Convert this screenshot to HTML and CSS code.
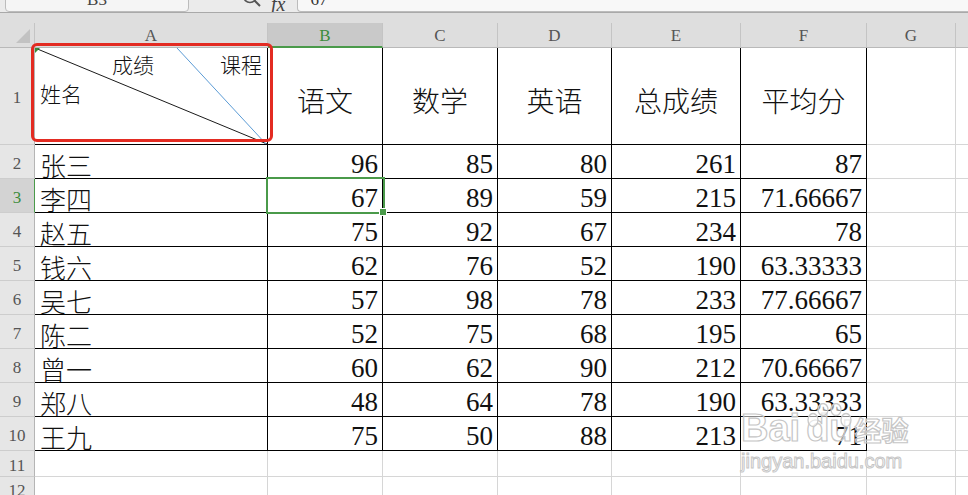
FILE: index.html
```html
<!DOCTYPE html>
<html lang="zh-CN">
<head>
	<meta charset="UTF-8" />
	<title>成绩表</title>
	<link rel="stylesheet" href="styles.css">
</head>
<body>
<div class="toolbar">
	<div class="namebox">B3</div>
	<svg class="zoom-icon" width="22" height="22" viewBox="0 0 22 22">
		<circle cx="9" cy="8" r="6.5" fill="none" stroke="#555" stroke-width="1.6"/>
		<line x1="13.5" y1="12.5" x2="19" y2="18" stroke="#555" stroke-width="2"/>
	</svg>
	<span class="fx">fx</span>
	<div class="formula">67</div>
</div>
<div class="topgap"></div>

<div class="sheet">
	<div class="corner"><span class="tri"></span></div>
	<div class="ch">A</div>
	<div class="ch sel">B</div>
	<div class="ch">C</div>
	<div class="ch">D</div>
	<div class="ch">E</div>
	<div class="ch">F</div>
	<div class="ch">G</div>
	<div class="ch last"></div>

	<!-- row 1: header -->
	<div class="rh">1</div>
	<div class="cell d diag">
		<svg class="diag-lines" viewBox="0 0 232 96" preserveAspectRatio="none">
			<line x1="0" y1="0" x2="232" y2="96" stroke="#1a1a1a" stroke-width="1"/>
			<line x1="142" y1="0" x2="231" y2="96" stroke="#5b9bd5" stroke-width="1"/>
			<polygon points="0,0 5,0 0,5" fill="#3a8a3a"/>
		</svg>
		<div class="diag-top"><span>成绩</span><span>课程</span></div>
		<div class="diag-bottom">姓名</div>
		<div class="mark"></div>
	</div>
	<div class="cell d title">语文</div>
	<div class="cell d title">数学</div>
	<div class="cell d title">英语</div>
	<div class="cell d title">总成绩</div>
	<div class="cell d title">平均分</div>
	<div class="cell"></div>
	<div class="cell last"></div>

	<div class="rh">2</div>
	<div class="cell d name">张三</div>
	<div class="cell d num">96</div>
	<div class="cell d num">85</div>
	<div class="cell d num">80</div>
	<div class="cell d num">261</div>
	<div class="cell d num">87</div>
	<div class="cell"></div>
	<div class="cell last"></div>

	<div class="rh sel">3</div>
	<div class="cell d name">李四</div>
	<div class="cell d num cur">67</div>
	<div class="cell d num">89</div>
	<div class="cell d num">59</div>
	<div class="cell d num">215</div>
	<div class="cell d num">71.66667</div>
	<div class="cell"></div>
	<div class="cell last"></div>

	<div class="rh">4</div>
	<div class="cell d name">赵五</div>
	<div class="cell d num">75</div>
	<div class="cell d num">92</div>
	<div class="cell d num">67</div>
	<div class="cell d num">234</div>
	<div class="cell d num">78</div>
	<div class="cell"></div>
	<div class="cell last"></div>

	<div class="rh">5</div>
	<div class="cell d name">钱六</div>
	<div class="cell d num">62</div>
	<div class="cell d num">76</div>
	<div class="cell d num">52</div>
	<div class="cell d num">190</div>
	<div class="cell d num">63.33333</div>
	<div class="cell"></div>
	<div class="cell last"></div>

	<div class="rh">6</div>
	<div class="cell d name">吴七</div>
	<div class="cell d num">57</div>
	<div class="cell d num">98</div>
	<div class="cell d num">78</div>
	<div class="cell d num">233</div>
	<div class="cell d num">77.66667</div>
	<div class="cell"></div>
	<div class="cell last"></div>

	<div class="rh">7</div>
	<div class="cell d name">陈二</div>
	<div class="cell d num">52</div>
	<div class="cell d num">75</div>
	<div class="cell d num">68</div>
	<div class="cell d num">195</div>
	<div class="cell d num">65</div>
	<div class="cell"></div>
	<div class="cell last"></div>

	<div class="rh">8</div>
	<div class="cell d name">曾一</div>
	<div class="cell d num">60</div>
	<div class="cell d num">62</div>
	<div class="cell d num">90</div>
	<div class="cell d num">212</div>
	<div class="cell d num">70.66667</div>
	<div class="cell"></div>
	<div class="cell last"></div>

	<div class="rh">9</div>
	<div class="cell d name">郑八</div>
	<div class="cell d num">48</div>
	<div class="cell d num">64</div>
	<div class="cell d num">78</div>
	<div class="cell d num">190</div>
	<div class="cell d num">63.33333</div>
	<div class="cell"></div>
	<div class="cell last"></div>

	<div class="rh">10</div>
	<div class="cell d name">王九</div>
	<div class="cell d num">75</div>
	<div class="cell d num">50</div>
	<div class="cell d num">88</div>
	<div class="cell d num">213</div>
	<div class="cell d num">71</div>
	<div class="cell"></div>
	<div class="cell last"></div>

	<div class="rh">11</div>
	<div class="cell"></div>
	<div class="cell"></div>
	<div class="cell"></div>
	<div class="cell"></div>
	<div class="cell"></div>
	<div class="cell"></div>
	<div class="cell"></div>
	<div class="cell last"></div>

	<div class="rh">12</div>
	<div class="cell"></div>
	<div class="cell"></div>
	<div class="cell"></div>
	<div class="cell"></div>
	<div class="cell"></div>
	<div class="cell"></div>
	<div class="cell"></div>
	<div class="cell last"></div>
</div>

<div class="watermark">
	<div class="wm-logo">
		<span>Bai</span>
		<span class="wm-du">
			<svg class="paw" width="50" height="44" viewBox="0 0 50 44">
				<g fill="rgba(255,255,255,.55)" stroke="#c9c9c9" stroke-width="1.3">
					<ellipse cx="8" cy="17" rx="5" ry="6.5"/>
					<ellipse cx="18" cy="6.5" rx="5" ry="6"/>
					<ellipse cx="31" cy="6.5" rx="5" ry="6"/>
					<ellipse cx="41" cy="17" rx="5" ry="6.5"/>
				</g>
			</svg>
			du
		</span>
		<span class="wm-cn">经验</span>
	</div>
	<div class="wm-url">jingyan.baidu.com</div>
</div>
</body>
</html>
```

FILE: styles.css
```css
* {
	padding: 0;
	margin: 0;
	box-sizing: border-box;
}
body {
	width: 968px;
	height: 495px;
	overflow: hidden;
	position: relative;
	background: #fff;
	font-family: "Liberation Serif", serif;
}

/* top bar, cut off by the screenshot */
.toolbar {
	height: 13px;
	display: flex;
	align-items: flex-end;
	overflow: hidden;
	background: #ebebeb;
	border-bottom: 1px solid #a9a9a9;
}
.namebox {
	flex: none;
	width: 184px;
	height: 24px;
	margin-left: 5px;
	border: 1px solid #bcbcbc;
	border-radius: 4px;
	background: #f5f5f5;
	text-align: center;
	font-size: 17px;
	line-height: 22px;
	color: #444;
}
.zoom-icon {
	flex: none;
	margin-left: 52px;
	margin-bottom: 2px;
}
.fx {
	flex: none;
	margin-left: 8px;
	font-size: 20px;
	font-style: italic;
	line-height: 16px;
	color: #444;
}
.formula {
	flex: 1;
	height: 24px;
	margin-left: 12px;
	border: 1px solid #bcbcbc;
	border-right: 0;
	border-radius: 4px 0 0 4px;
	background: #f8f8f8;
	padding-left: 12px;
	font-size: 17px;
	line-height: 22px;
	color: #333;
}
.topgap {
	height: 10px;
	background: #dedede;
}

/* grid */
.sheet {
	height: 472px;
	display: grid;
	grid-template-columns: 35px 233px 115px 115px 114px 129px 126px 89px 1fr;
	grid-template-rows: 25px 97px repeat(9, 34px) 26px 1fr;
}
.corner {
	position: relative;
	background: #dedede;
	border-right: 1px solid #c4c4c4;
	border-bottom: 1px solid #b9b9b9;
}
.tri {
	position: absolute;
	left: 16px;
	top: 6px;
	width: 14px;
	height: 14px;
	background: #c2c2c2;
	clip-path: polygon(100% 0, 100% 100%, 0 100%);
}
.ch {
	display: flex;
	align-items: center;
	justify-content: center;
	padding-top: 2px;
	background: #dedede;
	border-right: 1px solid #c4c4c4;
	border-bottom: 1px solid #b9b9b9;
	font-size: 17px;
	color: #555;
}
.ch.sel {
	background: #c9c9c9;
	color: #3c8c3c;
	border-bottom: 2px solid #4a9a4a;
}
.ch.last {
	border-right: 0;
}
.rh {
	display: flex;
	align-items: center;
	justify-content: center;
	padding-top: 4px;
	background: #e6e6e6;
	border-right: 1px solid #b5b5b5;
	border-bottom: 1px solid #cdcdcd;
	font-size: 17px;
	color: #555;
}
.rh.sel {
	background: #d3d3d3;
	color: #3c8c3c;
	border-right: 1px solid #4a9a4a;
}

.cell {
	border-right: 1px solid #d6d6d6;
	border-bottom: 1px solid #d6d6d6;
}
.cell.last {
	border-right: 0;
}
.cell.d {
	border-right-color: #000;
	border-bottom-color: #000;
}
.name {
	display: flex;
	align-items: center;
	padding: 6px 0 0 5px;
	font-family: "Noto Sans CJK SC", sans-serif;
	font-weight: 300;
	font-size: 26px;
	color: #111;
}
.num {
	display: flex;
	align-items: center;
	justify-content: flex-end;
	padding: 5px 4px 0 0;
	font-size: 27px;
	color: #111;
}
.title {
	display: flex;
	align-items: center;
	justify-content: center;
	padding-top: 8px;
	font-family: "Noto Sans CJK SC", sans-serif;
	font-weight: 300;
	font-size: 28px;
	color: #111;
}

/* diagonal header cell A1 */
.diag {
	position: relative;
	z-index: 3;
	padding: 4px 5px 0 5px;
	font-family: "Noto Sans CJK SC", sans-serif;
	font-weight: 300;
	font-size: 21px;
	line-height: 24px;
	color: #111;
}
.diag-lines {
	position: absolute;
	left: 0;
	top: 0;
	width: 232px;
	height: 96px;
}
.diag-top {
	position: relative;
	display: flex;
	justify-content: space-between;
	padding-left: 72px;
}
.diag-bottom {
	position: relative;
	margin-top: 5px;
}
.mark {
	position: absolute;
	left: -4px;
	top: -5px;
	width: 242px;
	height: 99px;
	border: 3px solid #e32b22;
	border-radius: 6px;
}

/* active cell */
.cur {
	position: relative;
	z-index: 2;
}
.cur::after {
	content: "";
	position: absolute;
	left: -2px;
	top: -2px;
	right: -3px;
	bottom: -2px;
	border: 2px solid #4a9a4a;
}
.cur::before {
	content: "";
	position: absolute;
	right: -5px;
	bottom: -4px;
	width: 6px;
	height: 6px;
	background: #4a9a4a;
	border: 1px solid #fff;
	z-index: 1;
}

/* watermark */
.watermark {
	position: absolute;
	left: 741px;
	top: 408px;
	color: rgba(255, 255, 255, .55);
	-webkit-text-stroke: 1.2px #c6c6c6;
	font-family: "Liberation Sans", sans-serif;
	font-weight: bold;
}
.wm-logo {
	display: flex;
	align-items: flex-end;
	font-size: 38px;
	line-height: 40px;
}
.wm-du {
	position: relative;
	margin-left: 6px;
}
.paw {
	position: absolute;
	left: -1px;
	top: -5px;
}
.wm-cn {
	margin-left: 2px;
	font-family: "Noto Sans CJK SC", sans-serif;
	font-size: 27px;
	line-height: 36px;
}
.wm-url {
	margin-top: 2px;
	font-size: 20px;
	line-height: 22px;
	font-weight: normal;
	-webkit-text-stroke: 1px #c6c6c6;
}
```
